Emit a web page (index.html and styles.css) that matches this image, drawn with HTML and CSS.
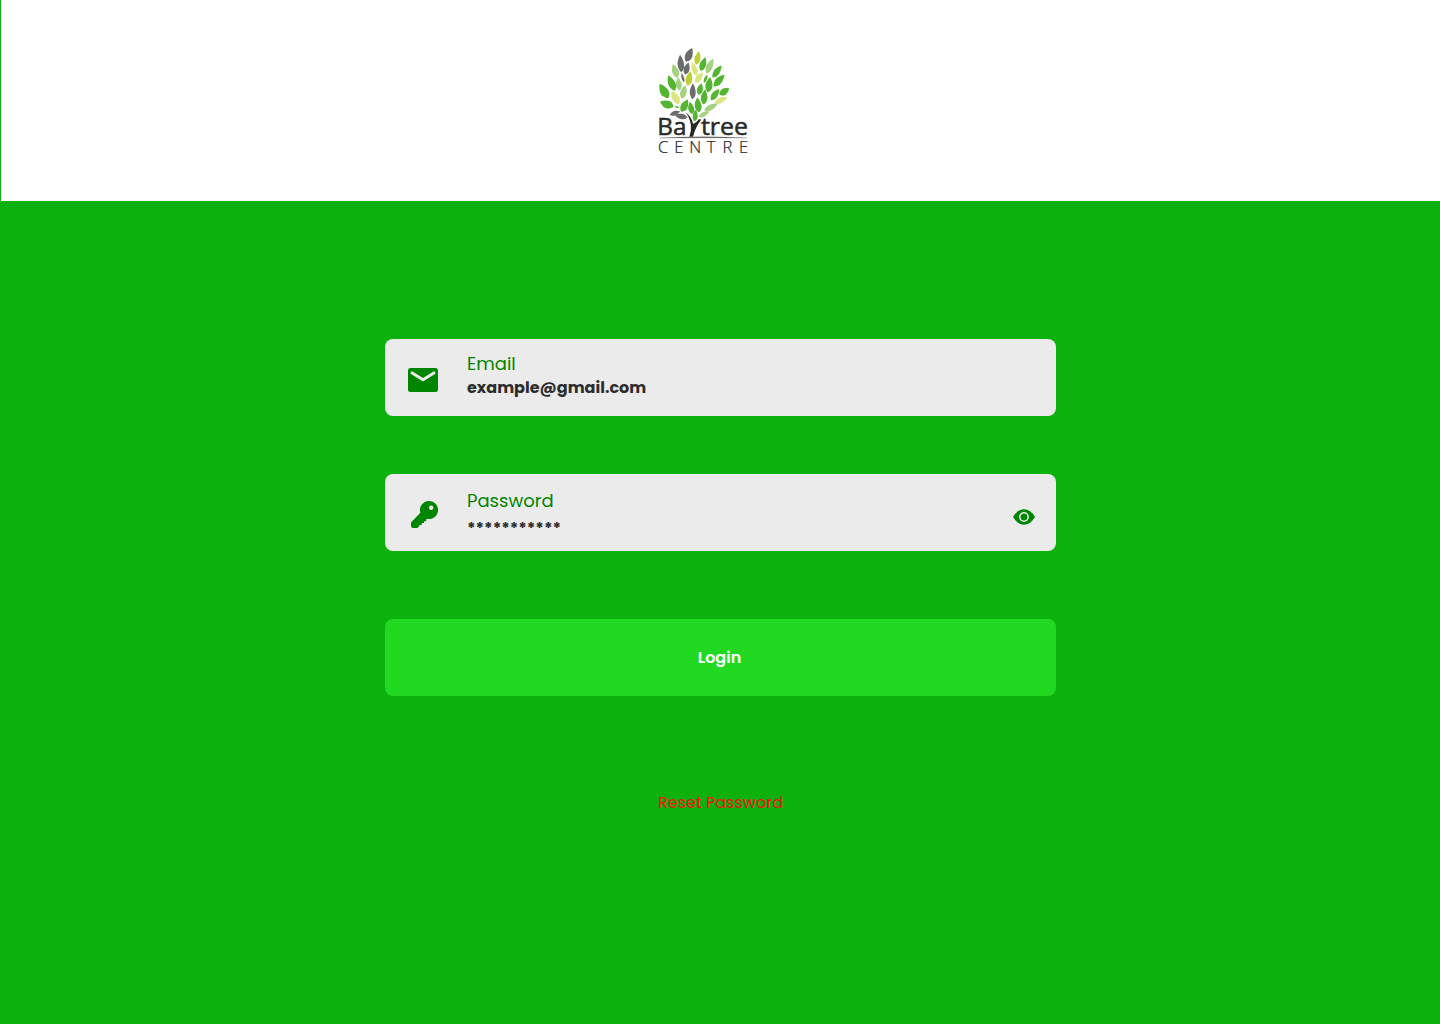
FILE: index.html
```html
<!DOCTYPE html>
<html lang="en">
<head>
<meta charset="utf-8">
<title>Baytree Centre – Login</title>
<link rel="stylesheet" href="styles.css">
</head>
<body>
<header class="header">
  <svg class="logo" viewBox="0 0 105 120" role="img" aria-label="Baytree Centre">
    <defs><path id="leaf" d="M.05-.5C.4-.28.66.1.36.32Q.15.46-.04.5Q-.25.44-.42.24C-.62-.06-.3-.3.05-.5Z"/></defs>
    <g fill="#6c6c6c">
      <use href="#leaf" transform="translate(39 14.8) rotate(22) scale(7.5 15)"/>
      <use href="#leaf" transform="translate(30.7 23.5) rotate(-6) scale(6.6 17.5)"/>
      <use href="#leaf" transform="translate(36.7 28.5) rotate(14) scale(6 12.5)"/>
      <use href="#leaf" transform="translate(32.7 37.5) rotate(-15) scale(2.6 10)"/>
      <use href="#leaf" transform="translate(42.7 51.2) scale(6 16)"/>
      <use href="#leaf" transform="translate(25 73) rotate(68) scale(4.5 11)"/>
      <use href="#leaf" transform="translate(31 76.5) rotate(-80) scale(5.5 13)"/>
    </g>
    <g fill="#bbd02f">
      <use href="#leaf" transform="translate(47.5 18) rotate(10) scale(6 14)"/>
      <use href="#leaf" transform="translate(39 38.5) rotate(10) scale(6.7 15)"/>
    </g>
    <g fill="#dce67e">
      <use href="#leaf" transform="translate(44.3 29) rotate(-20) scale(5.5 14)"/>
      <use href="#leaf" transform="translate(49 37.5) rotate(32) scale(6 13)"/>
      <use href="#leaf" transform="translate(25.3 57.5) rotate(-30) scale(7.2 15)"/>
      <use href="#leaf" transform="translate(71 60) rotate(64) scale(5.5 14)"/>
    </g>
    <g fill="#a4d27f">
      <use href="#leaf" transform="translate(25.2 31) rotate(-20) scale(6.7 14.5)"/>
      <use href="#leaf" transform="translate(28.7 44) rotate(-8) scale(6 13)"/>
      <use href="#leaf" transform="translate(33.5 52) rotate(14) scale(6.5 14)"/>
      <use href="#leaf" transform="translate(59.7 26) rotate(24) scale(6.5 16)"/>
      <use href="#leaf" transform="translate(61 67) rotate(60) scale(6 15)"/>
      <use href="#leaf" transform="translate(54 74) rotate(62) scale(4.5 12)"/>
    </g>
    <g fill="#54b531">
      <use href="#leaf" transform="translate(53 24) rotate(18) scale(6.5 14.5)"/>
      <use href="#leaf" transform="translate(67 31.5) rotate(35) scale(6.2 15)"/>
      <use href="#leaf" transform="translate(69 40.5) rotate(42) scale(6.8 16)"/>
      <use href="#leaf" transform="translate(59 44.8) rotate(6) scale(7.3 15.5)"/>
      <use href="#leaf" transform="translate(55.7 38.7) rotate(22) scale(3 9)"/>
      <use href="#leaf" transform="translate(21.5 43) rotate(-25) scale(7.3 17)"/>
      <use href="#leaf" transform="translate(13.9 51) rotate(-33) scale(8.5 17)"/>
      <use href="#leaf" transform="translate(50 49) rotate(12) scale(6 12)"/>
      <use href="#leaf" transform="translate(54.2 57) rotate(4) scale(6.7 15)"/>
      <use href="#leaf" transform="translate(65 54.5) rotate(35) scale(6.2 14)"/>
      <use href="#leaf" transform="translate(74.3 51.5) rotate(55) scale(6.7 11.5)"/>
      <use href="#leaf" transform="translate(16.7 64.3) rotate(-72) scale(8 14.5)"/>
      <use href="#leaf" transform="translate(34.5 65.7) rotate(26) scale(7.2 14)"/>
      <use href="#leaf" transform="translate(41 68) rotate(-14) scale(6 12)"/>
      <use href="#leaf" transform="translate(48 65) rotate(-8) scale(6.9 15)"/>
      <use href="#leaf" transform="translate(45.2 75.5) rotate(4) scale(5.2 12)"/>
      <use href="#leaf" transform="translate(27 67) rotate(-70) scale(2 4)"/>
    </g>
    <path d="M35.5 72.2Q41.2 76 43.2 84Q46 83 49.2 79L51.2 79.7Q45.4 87 43 96.8H39.3Q41.6 91 40.9 85Q39.6 77 35.5 72.2Z" fill="#272727"/>
    <text class="logo-name" x="7.2" y="94.7" textLength="29.2" lengthAdjust="spacingAndGlyphs">Ba</text>
    <text class="logo-name" x="51" y="94.7" textLength="47" lengthAdjust="spacingAndGlyphs">tree</text>
    <path d="M10 98Q52 95.7 97 98Q52 97.7 10 98Z" fill="#444" stroke="#777" stroke-width=".3"/>
    <g class="logo-sub">
      <text x="8" y="112.7">C</text><text x="24.3" y="112.7">E</text><text x="39.3" y="112.7">N</text><text x="56.7" y="112.7">T</text><text x="72.6" y="112.7">R</text><text x="89" y="112.7">E</text>
    </g>
  </svg>
</header>
<main class="login">
  <div class="field">
    <svg class="icon-mail" viewBox="0 0 30 24"><rect width="30" height="24" rx="2.5" fill="#008500"/><path d="M3 4.2L15 11.7L27 4.2" fill="none" stroke="#ebebeb" stroke-width="3"/></svg>
    <div class="field-text"><span class="label label-email">Email</span><span class="value">example@gmail.com</span></div>
  </div>
  <div class="field field-password">
    <svg class="icon-key" viewBox="0 0 27 27"><path fill="#008500" fill-rule="evenodd" d="M18 0A9 9 0 1 1 15.8 17.7L15.2 18.5V20.2H13V22H10.8V24H8.7L7.5 26Q7 27 6 27H2Q0 27 0 25V21.5L9.4 11.8A9 9 0 0 1 18 0ZM20.2 4.5A2.2 2.2 0 1 0 20.2 8.9A2.2 2.2 0 0 0 20.2 4.5Z"/></svg>
    <div class="field-text"><span class="label label-password">Password</span><span class="value value-password">***********</span></div>
    <svg class="icon-eye" viewBox="0 0 22 16"><path fill="#008500" d="M0 8Q4.5.3 11 .3T22 8Q17.5 15.7 11 15.7T0 8Z"/><circle cx="11" cy="8" r="4.2" fill="#008500" stroke="#ebebeb" stroke-width="1.5"/></svg>
  </div>
  <button class="login-button"><span>Login</span></button>
  <a class="reset">Reset Password</a>
</main>
</body>
</html>
```
FILE: styles.css
```css
* { box-sizing: border-box; }
body {
  margin: 0;
  min-height: 1024px;
  background: #0db10d;
  font-family: Poppins, Inter, sans-serif;
}
.header {
  height: 201px;
  margin-left: 1px;
  padding: 40px 0 0 649px;
  background: #fff;
}
.logo { display: block; width: 105px; height: 120px; }
.logo-name { font: 500 23.5px "Open Sans", sans-serif; fill: #292929; stroke: #292929; stroke-width: .5px; }
.logo-sub { font: 300 16.5px "Open Sans", sans-serif; fill: #222; stroke: #222; stroke-width: .2px; }
.login {
  display: flex;
  flex-direction: column;
  align-items: center;
  width: 671px;
  margin: 138px 0 0 385px;
}
.field {
  display: flex;
  width: 100%;
  height: 77px;
  padding-left: 23px;
  border-radius: 8px;
  background: #ebebeb;
}
.field-password { margin-top: 58px; padding-left: 26px; }
.field-text { display: flex; flex-direction: column; align-items: flex-start; margin-left: 29px; }
.icon-mail { width: 30px; height: 24px; margin-top: 29px; }
.icon-key { width: 27px; height: 27px; margin-top: 27px; }
.icon-eye { width: 22px; height: 16px; margin: 35px 21px 0 auto; }
.label { color: #008500; font-size: 18px; line-height: 24px; white-space: nowrap; }
.label-email { margin-top: 13px; }
.label-password { margin-top: 15px; }
.value { color: #2d2d2d; font-size: 16px; font-weight: 700; line-height: 24px; white-space: nowrap; }
.value-password { margin-top: 4px; }
.login-button {
  width: 100%;
  height: 77px;
  margin-top: 68px;
  padding: 0 2px 0 0;
  border: 0;
  border-radius: 8px;
  background: #22d922;
  color: #fff;
  font: 600 16px/24px Poppins, Inter, sans-serif;
}
.reset { margin-top: 95px; color: #f01414; font-size: 16px; line-height: 24px; }
```
